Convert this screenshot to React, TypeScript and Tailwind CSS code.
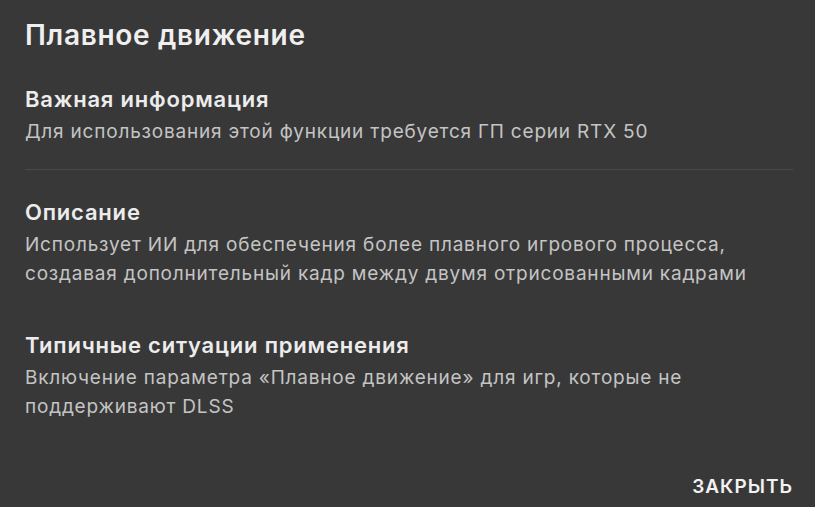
export default function App() {
  return (
    <div className="w-[815px] h-[507px] bg-[#383838] flex flex-col px-[25px] text-[#c4c4c4] overflow-hidden" style={{ fontFamily: "Inter, 'Noto Sans', sans-serif" }}>
      <h1 className="text-[28px] font-semibold tracking-[0.7px] text-[#efefef] leading-[32px] mt-[19px]">Плавное движение</h1>
      <div className="mt-[34px]">
        <h2 className="text-[22px] font-semibold tracking-[0.8px] text-[#ececec] leading-[28px]">Важная информация</h2>
        <p className="text-[19px] tracking-[0.8px] leading-[29px] mt-[4px]">Для использования этой функции требуется ГП серии RTX 50</p>
      </div>
      <div className="h-px bg-[#4a4a4a] mt-[23px] mr-[-3px]" />
      <div className="mt-[28px]">
        <h2 className="text-[22px] font-semibold tracking-[0.8px] text-[#ececec] leading-[28px]">Описание</h2>
        <p className="text-[19px] tracking-[0.8px] leading-[29px] mt-[4px]">Использует ИИ для обеспечения более плавного игрового процесса,<br />создавая дополнительный кадр между двумя отрисованными кадрами</p>
      </div>
      <div className="mt-[43px]">
        <h2 className="text-[22px] font-semibold tracking-[0.8px] text-[#ececec] leading-[28px]">Типичные ситуации применения</h2>
        <p className="text-[19px] tracking-[0.8px] leading-[29px] mt-[4px]">Включение параметра «Плавное движение» для игр, которые не<br />поддерживают DLSS</p>
      </div>
      <div className="flex justify-end mt-auto mb-[8px] mr-[-3px]">
        <button className="text-[19px] font-semibold tracking-[1px] text-[#f2f2f2] leading-[24px]">ЗАКРЫТЬ</button>
      </div>
    </div>
  );
}
